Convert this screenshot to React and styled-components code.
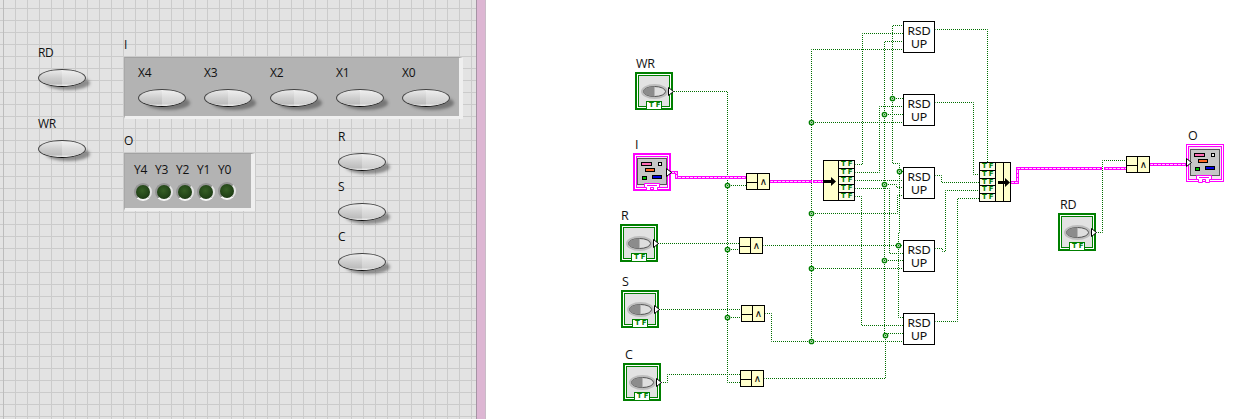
import styled, { createGlobalStyle, css } from 'styled-components';

const DIAGRAM_LEFT = 486;
const WIRE_GREEN = '#006f00';
const WIRE_PINK = '#ff00ff';

const GlobalStyle = createGlobalStyle`
  html, body {
    margin: 0;
    padding: 0;
    background: #fff;
  }
  body {
    font-family: "Open Sans", "Liberation Sans", sans-serif;
    font-size: 12px;
    color: #111;
  }
`;

const placed = css`
  position: absolute;
  left: ${p => p.$x}px;
  top: ${p => p.$y}px;
`;

const placedOnDiagram = css`
  position: absolute;
  left: ${p => p.$x - DIAGRAM_LEFT}px;
  top: ${p => p.$y}px;
`;

const Window = styled.div`
  display: flex;
  width: 1233px;
  height: 419px;
  overflow: hidden;
`;

const FrontPanel = styled.div`
  position: relative;
  width: 476px;
  flex: none;
  background-color: #e3e3e3;
  background-image:
    linear-gradient(90deg, #bcbcbc 1px, transparent 1px),
    linear-gradient(90deg, #cbcbcb 1px, transparent 1px),
    linear-gradient(#cbcbcb 1px, transparent 1px);
  background-size: 100% 100%, 12px 12px, 12px 12px;
  background-position: 3px 0, 3px 0, 0 8px;
  background-repeat: no-repeat, repeat, repeat;
`;

const Divider = styled.div`
  width: 8px;
  flex: none;
  background: #ddb6d3;
  border-left: 1px solid #a593a4;
  border-right: 1px solid #c9bcc7;
`;

const BlockDiagram = styled.div`
  position: relative;
  flex: 1;
  background: #fff;
`;

const Label = styled.div`
  height: 16px;
  line-height: 16px;
  font-size: 12px;
  letter-spacing: -0.3px;
  white-space: nowrap;
`;

const Control = styled.div`
  ${p => p.$x !== undefined && placed}
  display: flex;
  flex-direction: column;
  gap: 8px;
  width: 48px;
`;

const OvalButton = styled.div`
  width: 46px;
  height: 16px;
  border-radius: 50%;
  border: 1px solid #444;
  border-bottom-color: #111;
  background:
    linear-gradient(90deg, rgba(255, 255, 255, 0) 50%, rgba(255, 255, 255, 0.28) 50%),
    linear-gradient(180deg, #eaeaea 0%, #cdcdcd 50%, #bdbdbd 85%, #e6e6e6 100%);
  box-shadow: 6px 5px 3px -2px rgba(70, 70, 70, 0.55);
`;

const ClusterBlock = styled.div`
  ${placed}
`;

const ClusterBox = styled.div`
  box-sizing: border-box;
  margin-top: 4px;
  width: ${p => p.$w}px;
  height: ${p => p.$h}px;
  background: #b3b3b3;
  border-top: 1px solid #a2a2a2;
  border-left: 1px solid #a8a8a8;
  border-right: 4px solid #efefef;
  border-bottom: 3px solid #efefef;
`;

const ControlRow = styled.div`
  display: flex;
  gap: 18px;
  padding: 7px 0 0 13px;
`;

const LedGrid = styled.div`
  display: grid;
  grid-template-columns: repeat(5, 21px);
  padding: 8px 0 0 9px;
`;

const LedCell = styled.div`
  display: flex;
  flex-direction: column;
  gap: 5px;
`;

const Led = styled.div`
  box-sizing: border-box;
  width: 18px;
  height: 18px;
  margin-top: ${p => (p.$lift ? -1 : 0)}px;
  border-radius: 50%;
  border: 2px solid;
  border-color: #959595 #e4e4e4 #f6f6f6 #959595;
  background: radial-gradient(circle at 45% 40%, #365f25 0%, #234518 55%, #122a0b 100%);
`;

const WireLayer = styled.svg`
  position: absolute;
  inset: 0;
  width: 100%;
  height: 100%;
`;

const TerminalName = styled.div`
  ${placedOnDiagram}
  height: 16px;
  line-height: 16px;
  font-size: 12.5px;
  letter-spacing: -0.3px;
`;

const TerminalFrame = styled.div`
  ${placedOnDiagram}
  box-sizing: border-box;
  width: 38px;
  height: 38px;
  display: flex;
  align-items: center;
  justify-content: center;
  border: ${p => (p.$thin ? 1 : 2)}px solid ${p => p.$color};
  box-shadow: inset 0 0 0 1px #fff, inset 0 0 0 2px ${p => p.$color};
  background: ${p => p.$fill};
`;

const TypeChip = styled.div`
  position: absolute;
  left: 9px;
  bottom: -1px;
  width: 16px;
  height: 8px;
  box-sizing: border-box;
  background: #fff;
  border: 1px solid #007f00;
  border-bottom: none;
  color: #007f00;
  font: bold 7px/7px "DejaVu Sans", sans-serif;
  letter-spacing: 2px;
  padding-left: 2px;
  text-align: center;
`;

const Arrowhead = styled.svg`
  position: absolute;
  top: ${p => p.$top}px;
  ${p => (p.$side === 'left' ? 'left: -1px;' : 'right: -3px;')}
`;

const GateBox = styled.div`
  ${placedOnDiagram}
  box-sizing: border-box;
  width: 24px;
  height: 17px;
  display: grid;
  grid-template-columns: 1fr 1fr;
  border: 1px solid #000;
  background: #ffffcc;
`;

const GateInputs = styled.div`
  display: grid;
  grid-template-rows: 1fr 1fr;
  border-right: 1px solid #000;
`;

const GateInput = styled.div`
  & + & {
    border-top: 1px solid #000;
  }
`;

const GateGlyph = styled.div`
  font: 10px/15px "DejaVu Sans", sans-serif;
  text-align: center;
  color: #000;
`;

const ClusterNode = styled.div`
  ${placedOnDiagram}
  box-sizing: border-box;
  height: ${p => p.$h}px;
  display: flex;
  border: 1px solid #000;
  background: #ffffcc;
`;

const YellowColumn = styled.div`
  flex: none;
  width: ${p => p.$w}px;
  border-left: ${p => (p.$ruled ? '1px solid #000' : 'none')};
`;

const TfColumn = styled.div`
  flex: none;
  width: 15px;
  display: flex;
  flex-direction: column;
  border-left: ${p => (p.$ruled ? '1px solid #000' : 'none')};
`;

const TfRow = styled.div`
  flex: 1;
  overflow: hidden;
  background: #fbfbe8;
  color: #007f00;
  font: bold 7px/7px "DejaVu Sans", sans-serif;
  letter-spacing: 2px;
  padding-left: 2px;
  text-align: center;

  & + & {
    border-top: 1px solid #000;
  }
`;

const FlowArrow = styled.svg`
  position: absolute;
  left: ${p => p.$left}px;
  top: ${p => p.$top}px;
`;

const SubVi = styled.div`
  ${placedOnDiagram}
  box-sizing: border-box;
  width: 32px;
  height: 32px;
  border: 1px solid #000;
  background: #fff;
  color: #111;
  font: 12px/13px "Lato", "Liberation Sans", sans-serif;
  text-align: center;
  padding-top: 2px;
`;

const boolWires = [
  // WR runs down the left bus
  [[672, 91], [727, 91], [727, 382], [740, 382]],
  [[727, 185], [746, 185]],
  [[727, 249], [739, 249]],
  [[727, 317], [741, 317]],
  [[658, 243], [739, 243]],
  [[659, 309], [741, 309]],
  [[661, 382], [667, 382], [667, 374], [740, 374]],
  // R gate
  [[763, 245], [903, 245]],
  [[898, 245], [898, 232], [899, 232], [899, 171], [903, 171]],
  [[898, 245], [898, 317], [903, 317]],
  [[899, 171], [899, 163], [892, 163], [892, 25], [903, 25]],
  [[892, 98], [903, 98]],
  // S gate
  [[765, 313], [771, 313], [771, 341], [903, 341]],
  [[811, 49], [811, 341]],
  [[811, 49], [903, 49]],
  [[811, 122], [903, 122]],
  [[811, 213], [897, 213], [897, 195], [903, 195]],
  [[811, 268], [903, 268]],
  // C gate
  [[764, 378], [885, 378], [885, 335], [884, 335], [884, 41], [903, 41]],
  [[884, 333], [903, 333]],
  [[884, 260], [903, 260]],
  [[884, 184], [896, 184], [896, 187], [903, 187]],
  [[884, 114], [903, 114]],
  // unbundled outputs
  [[855, 164], [862, 164], [862, 33], [903, 33]],
  [[855, 172], [879, 172], [879, 106], [903, 106]],
  [[855, 180], [903, 180]],
  [[855, 188], [889, 188], [889, 253], [903, 253]],
  [[855, 196], [861, 196], [861, 325], [903, 325]],
  // RSD outputs
  [[935, 29], [987, 29], [987, 162]],
  [[935, 102], [973, 102], [973, 174], [979, 174]],
  [[935, 175], [941, 175], [941, 182], [979, 182]],
  [[935, 248], [942, 248], [942, 251], [945, 251], [945, 190], [979, 190]],
  [[935, 321], [957, 321], [957, 198], [979, 198]],
  // RD
  [[1096, 232], [1102, 232], [1102, 160], [1126, 160]],
];

const clusterWires = [
  [[671, 172], [676, 172], [676, 177], [746, 177]],
  [[770, 181], [810, 181]],
  [[814, 181], [823, 181]],
  [[1011, 182], [1017, 182], [1017, 168], [1100, 168]],
  [[1105, 168], [1126, 168]],
  [[1150, 164], [1188, 164]],
];

const junctions = [
  [727, 185], [727, 249], [727, 317],
  [811, 122], [811, 213], [811, 268], [811, 341],
  [892, 98], [884, 114], [884, 184], [884, 260], [885, 335],
  [899, 171], [898, 245],
];

const toPoints = pts => pts.map(p => p.join(',')).join(' ');

const Wires = () => (
  <WireLayer viewBox={`${DIAGRAM_LEFT} 0 747 419`}>
    <g transform="translate(0.5 0.5)" fill="none">
      {boolWires.map((pts, i) => (
        <polyline key={i} points={toPoints(pts)} stroke={WIRE_GREEN} strokeDasharray="1 1" strokeDashoffset="0.5" />
      ))}
      {clusterWires.map((pts, i) => (
        <g key={i}>
          <polyline points={toPoints(pts)} stroke={WIRE_PINK} strokeWidth="3" strokeLinecap="square" />
          <polyline points={toPoints(pts)} stroke="#ffd8ff" strokeDasharray="3 1" strokeDashoffset="0.5" />
        </g>
      ))}
      {junctions.map(([x, y]) => (
        <g key={`${x}-${y}`}>
          <circle cx={x} cy={y} r="2.2" fill="#cfe8cf" stroke="#007f00" strokeWidth="1.3" />
          <circle cx={x} cy={y} r="0.7" fill="#007f00" />
        </g>
      ))}
    </g>
  </WireLayer>
);

const OvalIcon = () => (
  <svg width="27" height="15" viewBox="0 0 27 15">
    <ellipse cx="13.5" cy="7.5" rx="13.5" ry="7.5" fill="#bdbdbd" />
    <ellipse cx="13.5" cy="7.5" rx="11" ry="5" fill="#dedede" stroke="#555" />
    <path d="M13.5 2.5 A11 5 0 0 0 13.5 12.5 Z" fill="#8c8c8c" />
  </svg>
);

const ClusterIcon = () => (
  <svg width="30" height="27" viewBox="0 0 30 27" style={{ display: 'block', marginTop: -2 }}>
    <rect x="0.5" y="0.5" width="29" height="26" fill="#c6c6c6" stroke="#555" />
    <rect x="4.5" y="4.5" width="10" height="3" fill="#ff69b4" stroke="#000" />
    <rect x="21.5" y="4.5" width="3" height="3" fill="#eee" stroke="#000" />
    <rect x="8.5" y="10.5" width="9" height="3" fill="#ff6a2a" stroke="#000" />
    <rect x="5.5" y="18.5" width="4" height="3" fill="#00c000" stroke="#000" />
    <rect x="15.5" y="17.5" width="9" height="3" fill="#0000e0" stroke="#000" />
  </svg>
);

const ClusterChip = () => (
  <svg width="16" height="8" viewBox="0 0 16 8" style={{ position: 'absolute', left: 9, bottom: -2 }}>
    <path d="M0.5 0.5H15.5V4.5H13.5V7.5H9.5V4.5H6.5V7.5H2.5V4.5H0.5Z" fill="#fff" stroke={WIRE_PINK} />
    <path d="M3 2.5H13" stroke={WIRE_PINK} />
  </svg>
);

const Triangle = ({ side = 'right', top }) => (
  <Arrowhead $side={side} $top={top} width="6" height="9" viewBox="0 0 6 9">
    <path d="M0.5 0.5L5.5 4.5L0.5 8.5Z" fill="#fff" stroke="#000" />
  </Arrowhead>
);

const BoolTerminal = ({ name, x, y, nameX, nameY }) => (
  <>
    <TerminalName $x={nameX} $y={nameY}>{name}</TerminalName>
    <TerminalFrame $x={x} $y={y} $color="#007f00" $fill="#e2e2e2">
      <OvalIcon />
      <TypeChip>TF</TypeChip>
      <Triangle top={13} />
    </TerminalFrame>
  </>
);

const ClusterTerminal = ({ name, x, y, nameX, nameY, indicator }) => (
  <>
    <TerminalName $x={nameX} $y={nameY}>{name}</TerminalName>
    <TerminalFrame $x={x} $y={y} $thin={indicator} $color={WIRE_PINK} $fill="#f9dff6">
      <ClusterIcon />
      <ClusterChip />
      <Triangle top={13} side={indicator ? 'left' : 'right'} />
    </TerminalFrame>
  </>
);

const Gate = ({ x, y }) => (
  <GateBox $x={x} $y={y}>
    <GateInputs>
      <GateInput />
      <GateInput />
    </GateInputs>
    <GateGlyph>∧</GateGlyph>
  </GateBox>
);

const BlackArrow = ({ left, top }) => (
  <FlowArrow $left={left} $top={top} width="12" height="9" viewBox="0 0 12 9">
    <path d="M0 3H7V0L12 4.5L7 9V6H0Z" fill="#000" />
  </FlowArrow>
);

const TfRows = () => (
  <>
    {[0, 1, 2, 3, 4].map(i => (
      <TfRow key={i}>TF</TfRow>
    ))}
  </>
);

const SwitchControl = ({ name, x, y }) => (
  <Control $x={x} $y={y}>
    <Label>{name}</Label>
    <OvalButton />
  </Control>
);

const inputNames = ['X4', 'X3', 'X2', 'X1', 'X0'];
const outputNames = ['Y4', 'Y3', 'Y2', 'Y1', 'Y0'];
const subViTops = [21, 94, 167, 240, 313];

const App = () => (
  <Window>
    <GlobalStyle />
    <FrontPanel>
      <SwitchControl name="RD" x={38} y={45} />
      <SwitchControl name="WR" x={38} y={116} />

      <ClusterBlock $x={124} $y={37}>
        <Label>I</Label>
        <ClusterBox $w={339} $h={62}>
          <ControlRow>
            {inputNames.map(n => (
              <Control key={n}>
                <Label>{n}</Label>
                <OvalButton />
              </Control>
            ))}
          </ControlRow>
        </ClusterBox>
      </ClusterBlock>

      <ClusterBlock $x={124} $y={133}>
        <Label>O</Label>
        <ClusterBox $w={131} $h={58}>
          <LedGrid>
            {outputNames.map(n => (
              <LedCell key={n}>
                <Label>{n}</Label>
                <Led $lift={n === 'Y0'} />
              </LedCell>
            ))}
          </LedGrid>
        </ClusterBox>
      </ClusterBlock>

      <SwitchControl name="R" x={338} y={129} />
      <SwitchControl name="S" x={338} y={179} />
      <SwitchControl name="C" x={338} y={229} />
    </FrontPanel>

    <Divider />

    <BlockDiagram>
      <Wires />

      <BoolTerminal name="WR" x={635} y={72} nameX={636} nameY={56} />
      <ClusterTerminal name="I" x={633} y={153} nameX={635} nameY={137} />
      <BoolTerminal name="R" x={620} y={224} nameX={621} nameY={208} />
      <BoolTerminal name="S" x={621} y={290} nameX={622} nameY={274} />
      <BoolTerminal name="C" x={623} y={363} nameX={625} nameY={347} />
      <BoolTerminal name="RD" x={1058} y={213} nameX={1060} nameY={197} />
      <ClusterTerminal name="O" x={1186} y={144} nameX={1188} nameY={128} indicator />

      <Gate x={746} y={173} />
      <Gate x={739} y={237} />
      <Gate x={741} y={305} />
      <Gate x={740} y={370} />
      <Gate x={1126} y={156} />

      <ClusterNode $x={823} $y={160} $h={41}>
        <YellowColumn $w={14}>
          <BlackArrow left={0} top={16} />
        </YellowColumn>
        <TfColumn $ruled>
          <TfRows />
        </TfColumn>
      </ClusterNode>

      <ClusterNode $x={979} $y={162} $h={40}>
        <TfColumn>
          <TfRows />
        </TfColumn>
        <YellowColumn $w={7} $ruled />
        <YellowColumn $w={6} $ruled />
        <BlackArrow left={18} top={15} />
      </ClusterNode>

      {subViTops.map(top => (
        <SubVi key={top} $x={903} $y={top}>
          RSD
          <br />
          UP
        </SubVi>
      ))}
    </BlockDiagram>
  </Window>
);

export default App;
